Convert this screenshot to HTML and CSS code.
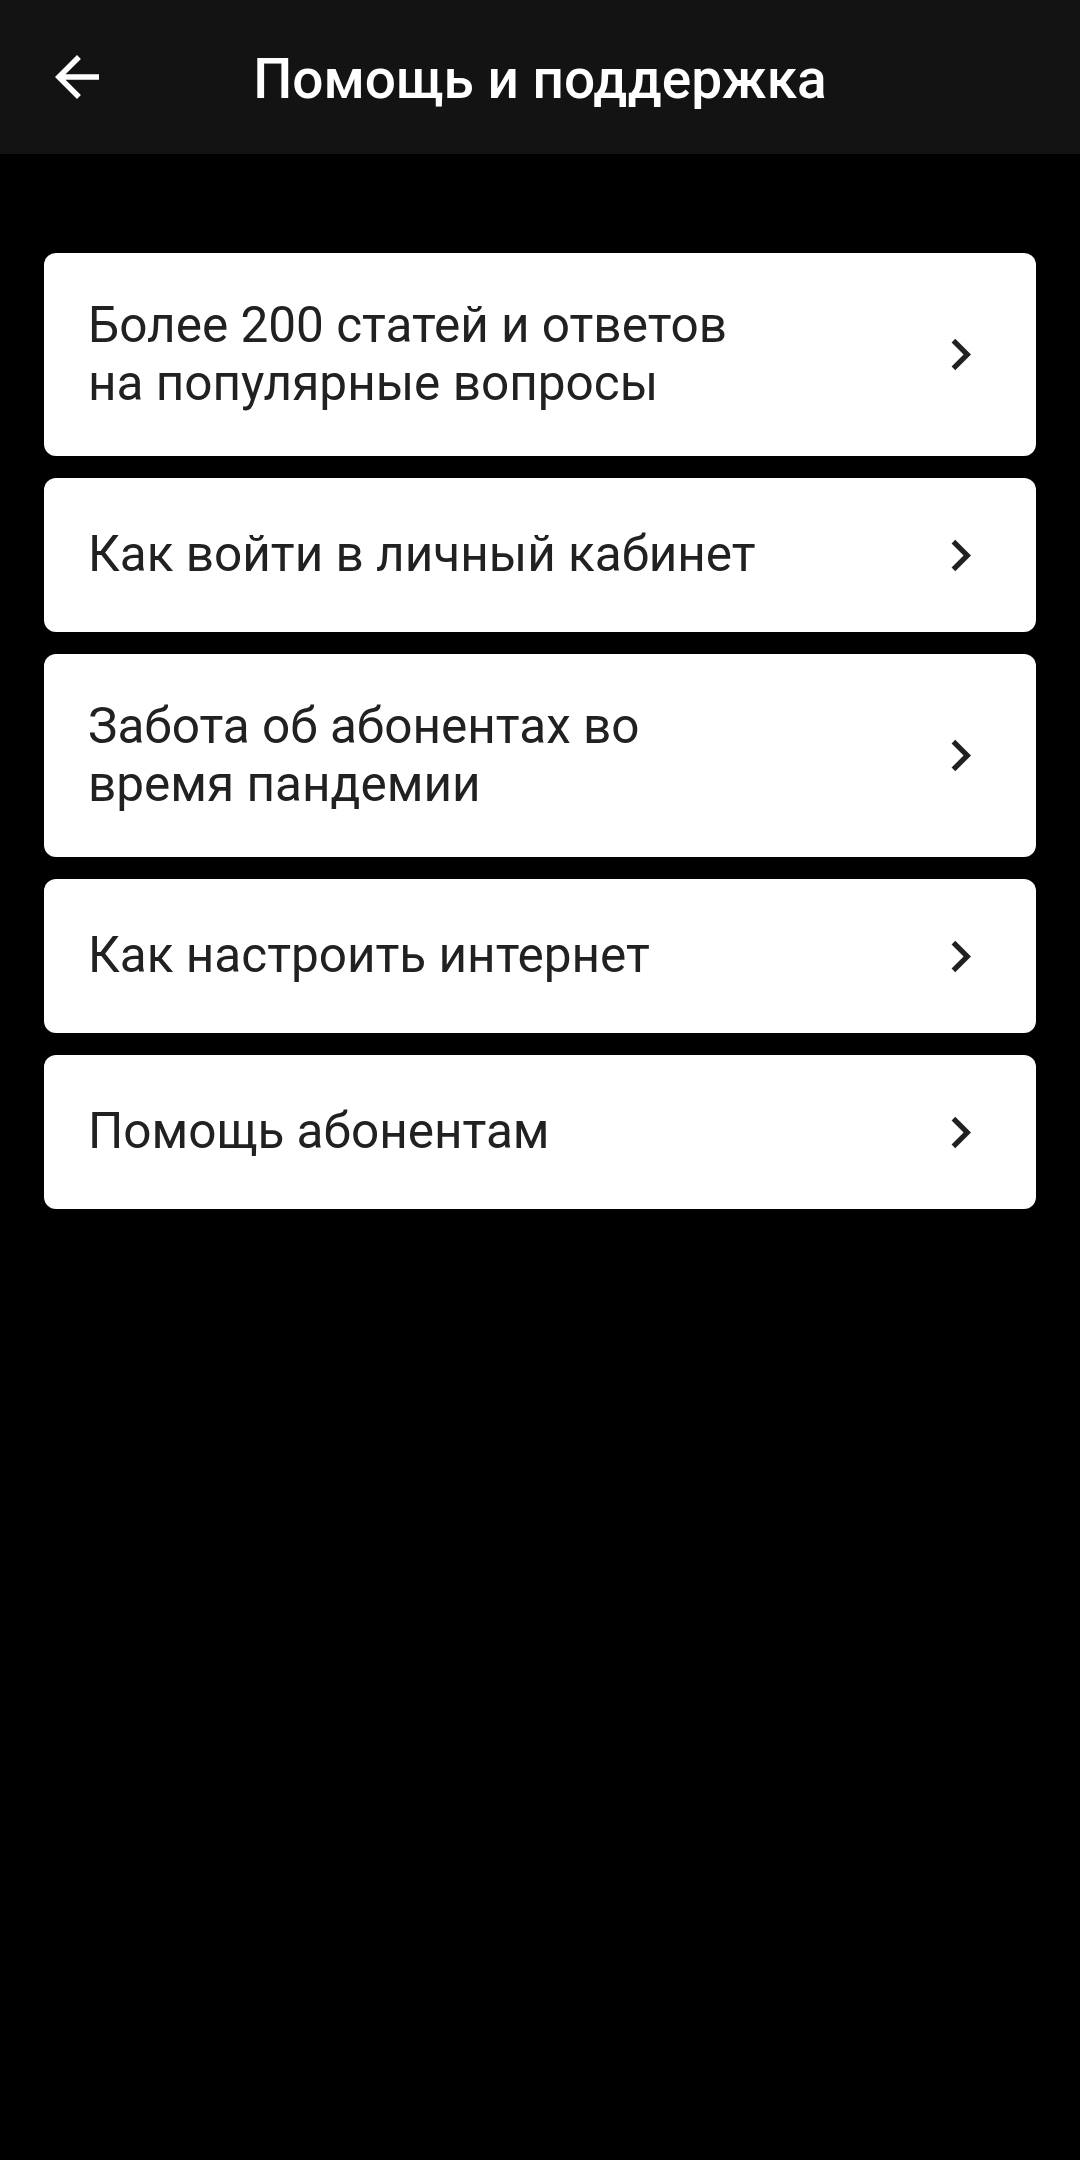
FILE: index.html
```html
<!DOCTYPE html>
<html lang="ru">
<head>
<meta charset="utf-8">
<title>Помощь и поддержка</title>
<link rel="stylesheet" href="styles.css">
</head>
<body>
<header class="toolbar">
  <div class="nav">
    <svg class="nav-icon" viewBox="0 0 24 24" width="66" height="66"><path d="M20 11H7.83l5.59-5.59L12 4l-8 8 8 8 1.41-1.41L7.83 13H20v-2z" fill="#ffffff"/></svg>
  </div>
  <h1 class="title">Помощь и поддержка</h1>
  <div class="spacer"></div>
</header>
<main class="list">
  <a class="card">
    <span class="card-text">Более 200 статей и ответов<br>на популярные вопросы</span>
    <svg class="chev" viewBox="0 0 24 24" width="63" height="63"><path d="M10 6L8.59 7.41 13.17 12l-4.58 4.59L10 18l6-6z" fill="#212121"/></svg>
  </a>
  <a class="card">
    <span class="card-text">Как войти в личный кабинет</span>
    <svg class="chev" viewBox="0 0 24 24" width="63" height="63"><path d="M10 6L8.59 7.41 13.17 12l-4.58 4.59L10 18l6-6z" fill="#212121"/></svg>
  </a>
  <a class="card">
    <span class="card-text">Забота об абонентах во<br>время пандемии</span>
    <svg class="chev" viewBox="0 0 24 24" width="63" height="63"><path d="M10 6L8.59 7.41 13.17 12l-4.58 4.59L10 18l6-6z" fill="#212121"/></svg>
  </a>
  <a class="card">
    <span class="card-text">Как настроить интернет</span>
    <svg class="chev" viewBox="0 0 24 24" width="63" height="63"><path d="M10 6L8.59 7.41 13.17 12l-4.58 4.59L10 18l6-6z" fill="#212121"/></svg>
  </a>
  <a class="card">
    <span class="card-text">Помощь абонентам</span>
    <svg class="chev" viewBox="0 0 24 24" width="63" height="63"><path d="M10 6L8.59 7.41 13.17 12l-4.58 4.59L10 18l6-6z" fill="#212121"/></svg>
  </a>
</main>
</body>
</html>
```
FILE: styles.css
```css
html, body {
  margin: 0;
  padding: 0;
  background: #000000;
}
body {
  width: 1080px;
  min-height: 2160px;
  font-family: Roboto, "Noto Sans", "Liberation Sans", sans-serif;
}
.toolbar {
  height: 154px;
  background: #131313;
  display: grid;
  grid-template-columns: 154px 1fr 154px;
  align-items: center;
}
.nav {
  display: flex;
  align-items: center;
  justify-content: flex-start;
  padding-left: 44px;
}
.nav-icon {
  display: block;
}
.title {
  margin: 0;
  padding-top: 3px;
  text-align: center;
  color: #ffffff;
  font-size: 55px;
  font-weight: 500;
  line-height: 64px;
  white-space: nowrap;
}
.list {
  padding: 99px 44px 0 44px;
  display: flex;
  flex-direction: column;
  gap: 22px;
}
.card {
  background: #ffffff;
  border-radius: 12px;
  min-height: 154px;
  box-sizing: border-box;
  padding: 44px 44px 44px 44px;
  display: flex;
  align-items: center;
  justify-content: space-between;
  text-decoration: none;
}
.card-text {
  color: #212121;
  font-size: 49.5px;
  line-height: 57.5px;
}
.chev {
  display: block;
  flex: none;
}
```
